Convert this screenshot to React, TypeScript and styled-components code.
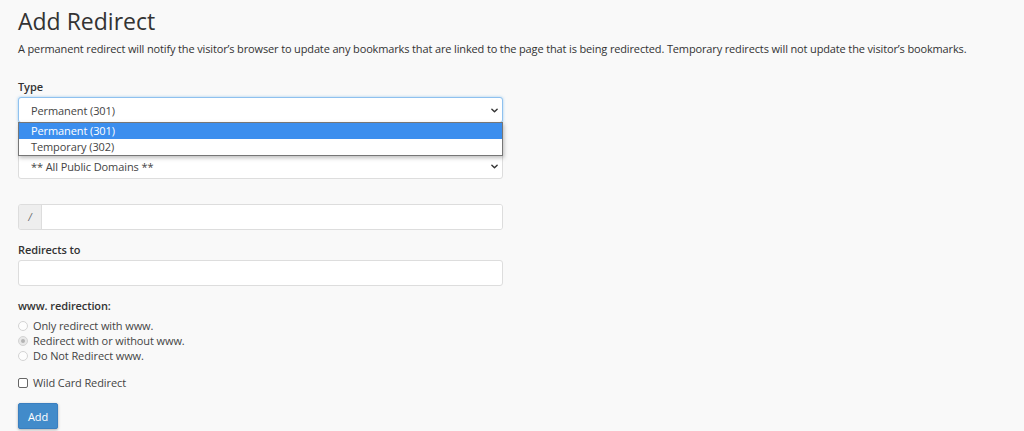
import React from 'react';
import styled, { createGlobalStyle } from 'styled-components';

const GlobalStyle = createGlobalStyle`
  html, body {
    margin: 0;
    padding: 0;
    background: #f9f9f9;
  }
  body {
    font-family: 'Open Sans', 'Liberation Sans', sans-serif;
    font-size: 11px;
    letter-spacing: -0.1px;
    color: #333;
  }
  input, button {
    letter-spacing: inherit;
  }
`;

const TYPE_OPTIONS = ['Permanent (301)', 'Temporary (302)'];

const WWW_OPTIONS = [
  { label: 'Only redirect with www.', checked: false },
  { label: 'Redirect with or without www.', checked: true },
  { label: 'Do Not Redirect www.', checked: false },
];

const Chevron = () => (
  <ChevronIcon viewBox="0 0 8 5" width="7" height="5">
    <path d="M1 1l3 3 3-3" fill="none" stroke="#333" strokeWidth="1.6" strokeLinecap="round" strokeLinejoin="round" />
  </ChevronIcon>
);

export default function App() {
  return (
    <Page>
      <GlobalStyle />
      <Title>Add Redirect</Title>
      <Description>
        A permanent redirect will notify the visitor’s browser to update any bookmarks that are linked to the page that is being
        redirected. Temporary redirects will not update the visitor’s bookmarks.
      </Description>

      <Field $top={21}>
        <Label>Type</Label>
        <SelectWrap>
          <SelectBox $focused>
            <span>Permanent (301)</span>
            <Chevron />
          </SelectBox>
          <DropList>
            {TYPE_OPTIONS.map((option, index) => (
              <Option key={option} $active={index === 0}>
                {option}
              </Option>
            ))}
          </DropList>
        </SelectWrap>
      </Field>

      <Field $top={11}>
        <Label>https?://(www.)?</Label>
        <SelectBox>
          <span>** All Public Domains **</span>
          <Chevron />
        </SelectBox>
      </Field>

      <Field $top={25}>
        <InputGroup>
          <Addon>/</Addon>
          <GroupInput type="text" />
        </InputGroup>
      </Field>

      <Field $top={11}>
        <Label>Redirects to</Label>
        <TextInput type="text" />
      </Field>

      <Field $top={11}>
        <Label>www. redirection:</Label>
        <RadioList>
          {WWW_OPTIONS.map((option) => (
            <ChoiceRow key={option.label}>
              <Radio $checked={option.checked} />
              {option.label}
            </ChoiceRow>
          ))}
        </RadioList>
      </Field>

      <Field $top={12}>
        <ChoiceRow>
          <CheckBox />
          Wild Card Redirect
        </ChoiceRow>
      </Field>

      <Field $top={13}>
        <AddButton>Add</AddButton>
      </Field>
    </Page>
  );
}

const Page = styled.div`
  padding: 6px 18px 0 18px;
  height: 431px;
  box-sizing: border-box;
  overflow: hidden;
`;

const Title = styled.h1`
  margin: 0;
  font-size: 23px;
  line-height: 30px;
  font-weight: 400;
  letter-spacing: 0;
  color: #333;
`;

const Description = styled.p`
  margin: 4px 0 0 0;
  font-size: 11px;
  line-height: 17px;
  letter-spacing: -0.14px;
  color: #333;
  white-space: nowrap;
`;

const Field = styled.div<{ $top: number }>`
  margin-top: ${(p) => p.$top}px;
  width: 485px;
`;

const Label = styled.div`
  font-weight: 600;
  font-size: 11px;
  line-height: 17px;
  margin-bottom: 2px;
  color: #333;
`;

const SelectWrap = styled.div`
  position: relative;
`;

const SelectBox = styled.div<{ $focused?: boolean }>`
  box-sizing: border-box;
  height: 26px;
  display: flex;
  align-items: center;
  justify-content: space-between;
  padding: 0 4px 0 12px;
  background: #fff;
  border: 1px solid ${(p) => (p.$focused ? '#8fc1ef' : '#ddd')};
  border-radius: 3px;
  box-shadow: ${(p) => (p.$focused ? '0 0 3px rgba(102, 175, 233, 0.6)' : 'none')};
  color: #444;
  font-size: 11px;
`;

const ChevronIcon = styled.svg`
  display: block;
  flex-shrink: 0;
`;

const DropList = styled.div`
  position: absolute;
  left: 0;
  right: 0;
  top: 25px;
  z-index: 2;
  background: #fff;
  border: 1px solid #767676;
  box-shadow: 1px 2px 4px rgba(0, 0, 0, 0.25);
`;

const Option = styled.div<{ $active?: boolean }>`
  height: 16px;
  line-height: 16px;
  padding-left: 12px;
  font-size: 11px;
  background: ${(p) => (p.$active ? '#3b8eee' : '#fff')};
  color: ${(p) => (p.$active ? '#fff' : '#444')};
`;

const InputGroup = styled.div`
  display: flex;
  height: 26px;
  box-sizing: border-box;
  border: 1px solid #ddd;
  border-radius: 3px;
  overflow: hidden;
`;

const Addon = styled.div`
  width: 22px;
  flex-shrink: 0;
  display: flex;
  align-items: center;
  justify-content: center;
  background: #eee;
  border-right: 1px solid #ddd;
  color: #666;
  font-size: 10px;
  font-style: italic;
`;

const GroupInput = styled.input`
  flex: 1;
  border: 0;
  outline: none;
  background: #fff;
  padding: 0 8px;
  font-family: inherit;
`;

const TextInput = styled.input`
  display: block;
  box-sizing: border-box;
  width: 100%;
  height: 26px;
  border: 1px solid #ddd;
  border-radius: 3px;
  background: #fff;
  outline: none;
  padding: 0 8px;
  font-family: inherit;
`;

const RadioList = styled.div`
  margin-top: 4px;
`;

const ChoiceRow = styled.div`
  display: flex;
  align-items: center;
  gap: 5px;
  height: 15px;
  line-height: 15px;
  font-size: 11px;
  color: #444;
`;

const Radio = styled.span<{ $checked?: boolean }>`
  box-sizing: border-box;
  width: 10px;
  height: 10px;
  border-radius: 50%;
  border: 1px solid #d4d4d4;
  background: ${(p) => (p.$checked ? '#e8e8e8' : '#fdfdfd')};
  display: flex;
  align-items: center;
  justify-content: center;
  &::after {
    content: '';
    width: 4px;
    height: 4px;
    border-radius: 50%;
    background: #b4b4b4;
    display: ${(p) => (p.$checked ? 'block' : 'none')};
  }
`;

const CheckBox = styled.span`
  box-sizing: border-box;
  width: 10px;
  height: 10px;
  border: 1px solid #666;
  border-radius: 2px;
  background: #fff;
`;

const AddButton = styled.button`
  box-sizing: border-box;
  width: 40px;
  height: 26px;
  padding: 0;
  background: #428bca;
  border: 1px solid #3a7fc0;
  border-radius: 2px;
  box-shadow: 0 1px 3px rgba(0, 0, 0, 0.3);
  color: #fff;
  font-family: inherit;
  font-size: 11px;
`;
